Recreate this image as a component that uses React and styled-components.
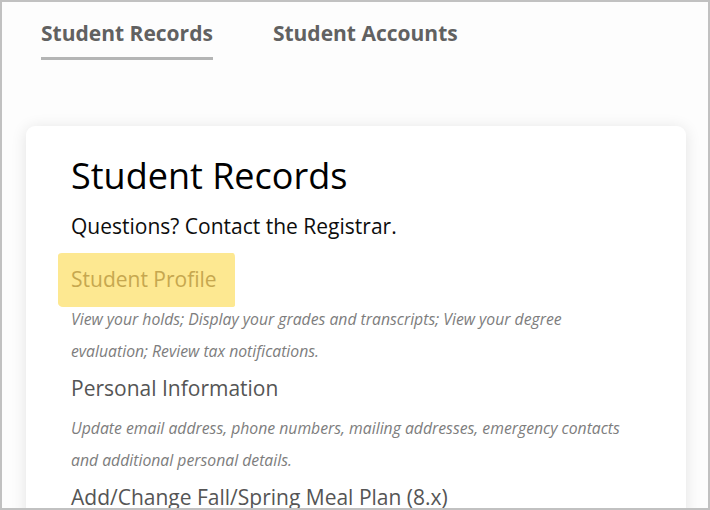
import styled, { createGlobalStyle } from 'styled-components';

const GlobalStyle = createGlobalStyle`
  * {
    box-sizing: border-box;
  }
  html,
  body {
    margin: 0;
    padding: 0;
  }
  body {
    font-family: 'Open Sans', 'Noto Sans', sans-serif;
    background: #ffffff;
    overflow: hidden;
  }
`;

const items = [
  {
    title: 'Student Profile',
    highlighted: true,
    lines: [
      'View your holds; Display your grades and transcripts; View your degree',
      'evaluation; Review tax notifications.',
    ],
  },
  {
    title: 'Personal Information',
    lines: [
      'Update email address, phone numbers, mailing addresses, emergency contacts',
      'and additional personal details.',
    ],
  },
  {
    title: 'Add/Change Fall/Spring Meal Plan (8.x)',
    lines: [],
  },
];

export default function App() {
  return (
    <>
      <GlobalStyle />
      <Frame>
        <Tabs>
          <Tab active>Student Records</Tab>
          <Tab>Student Accounts</Tab>
        </Tabs>
        <Card>
          <Heading>Student Records</Heading>
          <Contact>Questions? Contact the Registrar.</Contact>
          <LinkList>
            {items.map((item) => (
              <LinkItem key={item.title}>
                <LinkTitle highlighted={item.highlighted}>
                  {item.title}
                </LinkTitle>
                {item.lines.length > 0 && (
                  <Description>
                    {item.lines.map((line) => (
                      <span key={line}>{line}</span>
                    ))}
                  </Description>
                )}
              </LinkItem>
            ))}
          </LinkList>
        </Card>
      </Frame>
    </>
  );
}

const Frame = styled.div`
  width: 710px;
  height: 510px;
  border: 2px solid #c1c1c1;
  background: #fdfdfd;
  overflow: hidden;
`;

const Tabs = styled.nav`
  display: flex;
  align-items: flex-start;
  gap: 60px;
  padding: 16px 0 0 39px;
  height: 124px;
`;

const Tab = styled.div`
  font-size: 21px;
  font-weight: 700;
  color: #616161;
  line-height: 30px;
  padding-bottom: 9px;
  border-bottom: 3px solid ${({ active }) => (active ? '#b4b5b5' : 'transparent')};
`;

const Card = styled.section`
  margin: 0 22px 0 24px;
  background: #ffffff;
  border-radius: 9px;
  box-shadow: 0 2px 16px rgba(0, 0, 0, 0.11);
  padding: 26px 40px 0 45px;
  height: 400px;
`;

const Heading = styled.h1`
  margin: 0;
  font-size: 36px;
  font-weight: 400;
  line-height: 48px;
  color: #000000;
`;

const Contact = styled.p`
  margin: 11px 0 0;
  font-size: 21px;
  line-height: 30px;
  color: #0d0d0d;
`;

const LinkList = styled.div`
  display: flex;
  flex-direction: column;
  gap: 5px;
  margin-top: 22px;
`;

const LinkItem = styled.div`
  display: flex;
  flex-direction: column;
  align-items: flex-start;
  gap: 8px;
`;

const LinkTitle = styled.a`
  position: relative;
  isolation: isolate;
  font-size: 21px;
  line-height: 32px;
  color: ${({ highlighted }) => (highlighted ? '#c6a74f' : '#555555')};
  text-decoration: none;

  /* highlighter stroke behind the current link */
  &::before {
    content: '';
    display: ${({ highlighted }) => (highlighted ? 'block' : 'none')};
    position: absolute;
    z-index: -1;
    top: -10px;
    bottom: -12px;
    left: -13px;
    right: -18px;
    background: #fde891;
    border-radius: 4px 2px 3px 5px / 3px 5px 2px 4px;
  }
`;

const Description = styled.p`
  margin: 0;
  display: flex;
  flex-direction: column;
  font-size: 15.75px;
  font-style: italic;
  line-height: 32px;
  color: #7d7d7d;
`;
